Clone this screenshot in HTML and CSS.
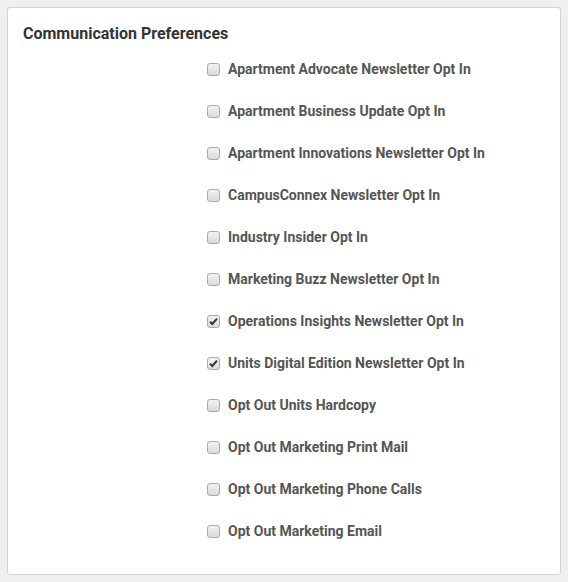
FILE: index.html
```html
<!DOCTYPE html>
<html>
<head>
<meta charset="utf-8">
<link rel="stylesheet" href="styles.css">
</head>
<body>
<section class="card">
  <h3 class="card-title">Communication Preferences</h3>
  <ul class="prefs">
    <li class="pref"><span class="box"></span><span class="label">Apartment Advocate Newsletter Opt In</span></li>
    <li class="pref"><span class="box"></span><span class="label">Apartment Business Update Opt In</span></li>
    <li class="pref"><span class="box"></span><span class="label">Apartment Innovations Newsletter Opt In</span></li>
    <li class="pref"><span class="box"></span><span class="label">CampusConnex Newsletter Opt In</span></li>
    <li class="pref"><span class="box"></span><span class="label">Industry Insider Opt In</span></li>
    <li class="pref"><span class="box"></span><span class="label">Marketing Buzz Newsletter Opt In</span></li>
    <li class="pref"><span class="box checked"><svg viewBox="0 0 13 13" width="13" height="13"><path d="M3 6.6 L5.3 9 L10 3.6" fill="none" stroke="#333" stroke-width="2"/></svg></span><span class="label">Operations Insights Newsletter Opt In</span></li>
    <li class="pref"><span class="box checked"><svg viewBox="0 0 13 13" width="13" height="13"><path d="M3 6.6 L5.3 9 L10 3.6" fill="none" stroke="#333" stroke-width="2"/></svg></span><span class="label">Units Digital Edition Newsletter Opt In</span></li>
    <li class="pref"><span class="box"></span><span class="label">Opt Out Units Hardcopy</span></li>
    <li class="pref"><span class="box"></span><span class="label">Opt Out Marketing Print Mail</span></li>
    <li class="pref"><span class="box"></span><span class="label">Opt Out Marketing Phone Calls</span></li>
    <li class="pref"><span class="box"></span><span class="label">Opt Out Marketing Email</span></li>
  </ul>
</section>
</body>
</html>
```
FILE: styles.css
```css
html, body {
  margin: 0;
  background: #eeeff1;
}
body {
  padding: 7px;
  font-family: Roboto, "Liberation Sans", sans-serif;
}
.card {
  background: #fff;
  border: 1px solid #d4d4d4;
  border-radius: 3px;
  height: 568px;
  box-sizing: border-box;
  padding: 16px 15px 0;
}
.card-title {
  margin: 0;
  font-size: 16px;
  line-height: 20px;
  font-weight: 700;
  color: #333;
}
.prefs {
  list-style: none;
  margin: 4px 0 0 184px;
  padding: 0;
}
.pref {
  height: 42px;
  display: flex;
  align-items: center;
  gap: 8px;
}
.box {
  width: 13px;
  height: 13px;
  box-sizing: border-box;
  border: 1px solid #a9a9a9;
  border-radius: 3px;
  background: linear-gradient(#f2f2f2, #dadada);
  display: flex;
}
.box svg {
  margin: -1px;
}
.label {
  font-size: 14px;
  font-weight: 700;
  color: #555;
}
```
